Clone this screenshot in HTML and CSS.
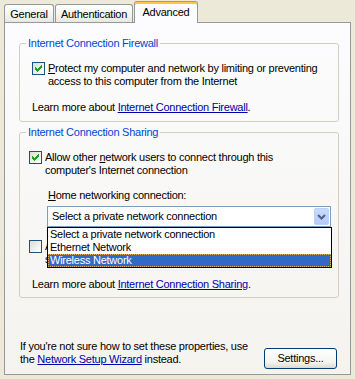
FILE: index.html
```html
<!DOCTYPE html>
<html>
<head>
    <title>Advanced</title>
    <meta name="viewport" content="width=device-width, initial-scale=1.0">
    <link rel="stylesheet" href="styles.css">
</head>
<body>
    <div class="tabs">
        <div class="tab tab-general">General</div>
        <div class="tab tab-auth">Authentication</div>
        <div class="tab tab-advanced active">Advanced</div>
    </div>
    <div class="panel">
        <fieldset class="group group-firewall">
            <legend>Internet Connection Firewall</legend>
            <div class="check check-firewall">
                <span class="box">
                    <svg width="11" height="11" viewBox="0 0 11 11"><path fill="#21A121" d="M8 2h1v1h-1z M7 3h2v1h-2z M2 4h1v1h-1z M6 4h3v1h-3z M2 5h2v1h-2z M5 5h3v1h-3z M2 6h5v1h-5z M3 7h3v1h-3z M4 8h1v1h-1z"/></svg>
                </span>
                <span class="label"><u>P</u>rotect my computer and network by limiting or preventing<br>access to this computer from the Internet</span>
            </div>
            <p class="learn">Learn more about <a href="#">Internet Connection Firewall</a>.</p>
        </fieldset>

        <fieldset class="group group-sharing">
            <legend>Internet Connection Sharing</legend>
            <div class="check">
                <span class="box">
                    <svg width="11" height="11" viewBox="0 0 11 11"><path fill="#21A121" d="M8 2h1v1h-1z M7 3h2v1h-2z M2 4h1v1h-1z M6 4h3v1h-3z M2 5h2v1h-2z M5 5h3v1h-3z M2 6h5v1h-5z M3 7h3v1h-3z M4 8h1v1h-1z"/></svg>
                </span>
                <span class="label">Allow other <u>n</u>etwork users to connect through this<br>computer's Internet connection</span>
            </div>
            <div class="home-label"><u>H</u>ome networking connection:</div>
            <div class="combo">
                <span class="combo-text">Select a private network connection</span>
                <span class="combo-arrow">
                    <svg width="15" height="17" viewBox="0 0 15 17"><path fill="none" stroke="#4D6185" stroke-width="2" d="M4 7l3.5 3.5L11 7"/></svg>
                </span>
                <ul class="combo-list">
                    <li>Select a private network connection</li>
                    <li>Ethernet Network</li>
                    <li class="selected">Wireless Network</li>
                </ul>
            </div>
            <div class="check check-control">
                <span class="box"></span>
                <span class="label">Allow other network users to control or disable the<br>shared Internet connection</span>
            </div>
            <p class="learn">Learn more about <a href="#">Internet Connection Sharing</a>.</p>
        </fieldset>

        <div class="footer">
            <p class="hint">If you're not sure how to set these properties, use<br>the <a href="#">Network Setup Wizard</a> instead.</p>
            <button class="settings">Settings...</button>
        </div>
    </div>
</body>
</html>
```

FILE: styles.css
```css
body {
    margin: 0;
    width: 355px;
    height: 379px;
    overflow: hidden;
    background-color: #ECE9D8;
    font-family: 'Liberation Sans', Arial, sans-serif;
    font-size: 11px;
    line-height: 13px;
    letter-spacing: -0.25px;
    color: black;
}

a {
    color: #0000A8;
    text-decoration: underline;
}

p {
    margin: 0;
}

/* Tab strip */
.tabs {
    display: flex;
    align-items: flex-end;
    height: 22px;
    padding-left: 4px;
}

.tab {
    box-sizing: border-box;
    height: 18px;
    margin-right: 1px;
    padding-top: 3px;
    border: 1px solid #919B9C;
    border-bottom: none;
    border-radius: 3px 3px 0 0;
    background: linear-gradient(#FFFFFF, #F3F3EF 60%, #E8E7E1);
    text-align: center;
}

.tab-general {
    width: 50px;
}

.tab-auth {
    width: 78px;
}

.tab-advanced {
    width: 64px;
}

.tab.active {
    position: relative;
    z-index: 1;
    height: 22px;
    margin-bottom: -1px;
    padding-top: 4px;
    border-top: 1px solid #E68B2C;
    box-shadow: inset 0 2px 0 #FFC73C;
    background: #FCFCFE;
}

/* Page */
.panel {
    box-sizing: border-box;
    display: flex;
    flex-direction: column;
    width: 347px;
    height: 353px;
    margin-left: 4px;
    border: 1px solid #919B9C;
    background: linear-gradient(#FCFCFE, #F4F3EE);
}

.group {
    margin: 0 11px 0 14px;
    padding: 0 0 6px 0;
    min-width: 0;
    border: 1px solid #D0D0BF;
    border-radius: 3px;
}

.group-firewall {
    margin-top: 14px;
    padding-bottom: 7px;
}

.group-sharing {
    margin-top: 4px;
}

legend {
    margin-left: 6px;
    padding: 0 2px;
    color: #0046D5;
}

.check {
    display: flex;
    gap: 3px;
    margin: 12px 0 0 9px;
}

.check-firewall {
    margin-left: 12px;
}

.check-control {
    margin-top: 13px;
}

.box {
    box-sizing: border-box;
    flex: none;
    width: 13px;
    height: 13px;
    border: 1px solid #1C5180;
    background: linear-gradient(135deg, #DCDCD7, #FFFFFF);
}

.box svg {
    display: block;
}

.learn {
    margin: 13px 0 0 12px;
}

.group-sharing .learn {
    margin-top: 12px;
}

.home-label {
    margin: 12px 0 0 28px;
}

/* Combo box with its open list */
.combo {
    position: relative;
    box-sizing: border-box;
    display: flex;
    align-items: center;
    width: 284px;
    height: 21px;
    margin: 4px 0 0 27px;
    padding-left: 4px;
    border: 1px solid #7F9DB9;
    background: white;
}

.combo-arrow {
    box-sizing: border-box;
    width: 15px;
    height: 17px;
    margin-left: auto;
    margin-right: 1px;
    border: 1px solid #BAD1FC;
    border-radius: 2px;
    background: linear-gradient(#CAD9FC, #B7CBF8);
}

.combo-arrow svg {
    display: block;
    margin: -1px;
}

.combo-list {
    position: absolute;
    z-index: 2;
    top: 20px;
    left: -1px;
    box-sizing: border-box;
    width: 285px;
    margin: 0;
    padding: 0;
    list-style: none;
    border: 1px solid black;
    background: white;
}

.combo-list li {
    height: 13px;
    padding-left: 2px;
}

.combo-list li.selected {
    background: #316AC5;
    color: white;
    outline: 1px dotted #E0B060;
    outline-offset: -1px;
}

/* Bottom hint and button */
.footer {
    display: flex;
    align-items: flex-end;
    justify-content: space-between;
    margin-top: auto;
    padding: 0 13px 5px 15px;
}

.hint {
    margin-bottom: 3px;
}

.settings {
    box-sizing: border-box;
    width: 73px;
    height: 21px;
    padding: 0;
    border: 1px solid #003C74;
    border-radius: 3px;
    background: linear-gradient(#FFFFFF, #F4F4F0 70%, #DCD8CE);
    font: inherit;
    letter-spacing: inherit;
    color: black;
}
```
